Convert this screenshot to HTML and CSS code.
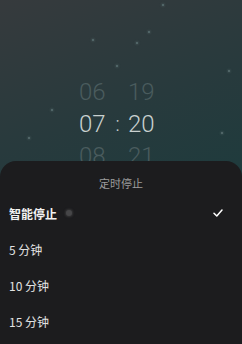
FILE: index.html
```html
<!DOCTYPE html>
<html lang="zh">
<head>
<meta charset="utf-8">
<link rel="stylesheet" href="styles.css">
</head>
<body>
<div class="screen">
  <div class="scene">
    <span class="star" style="left:162px;top:4px"></span>
    <span class="star" style="left:148px;top:31px"></span>
    <span class="star" style="left:92px;top:39px"></span>
    <span class="star" style="left:136px;top:42px"></span>
    <span class="star" style="left:116px;top:65px"></span>
    <span class="star" style="left:228px;top:70px"></span>
    <span class="star" style="left:51px;top:109px"></span>
    <span class="star" style="left:28px;top:137px"></span>
    <span class="star" style="left:221px;top:132px"></span>
    <div class="picker">
      <div class="row faint"><span class="col">06</span><span class="sep"></span><span class="col">19</span></div>
      <div class="row active"><span class="col">07</span><span class="sep">:</span><span class="col">20</span></div>
      <div class="row faint"><span class="col">08</span><span class="sep"></span><span class="col">21</span></div>
    </div>
  </div>
  <div class="sheet">
    <div class="title">定时停止</div>
    <div class="item selected"><span class="label">智能停止</span><span class="dot"></span><svg class="check" width="10" height="8" viewBox="0 0 10 8"><path d="M1 4.2 L3.8 7 L9 1" fill="none" stroke="#ffffff" stroke-width="1.5" stroke-linecap="round" stroke-linejoin="round"/></svg></div>
    <div class="item"><span class="label">5 分钟</span></div>
    <div class="item"><span class="label">10 分钟</span></div>
    <div class="item"><span class="label">15 分钟</span></div>
  </div>
</div>
</body>
</html>
```
FILE: styles.css
```css
html, body {
  margin: 0;
  padding: 0;
  background: #1c1c1e;
}
.screen {
  width: 242px;
  height: 344px;
  overflow: hidden;
  position: relative;
  font-family: "Noto Sans CJK SC", "Noto Sans", sans-serif;
  background: linear-gradient(160deg, #363a3d 0%, #283a3d 35%, #1f3b3d 60%, #22403f 100%);
}
.scene {
  position: relative;
  height: 161px;
  overflow: hidden;
}
.star {
  position: absolute;
  width: 2px;
  height: 2px;
  border-radius: 50%;
  background: #5a6f71;
  box-shadow: 0 0 2px 1px rgba(90, 111, 113, 0.35);
}
.picker {
  padding-top: 76px;
  font-family: Roboto, "Liberation Sans", sans-serif;
  font-weight: 300;
  font-size: 24px;
}
.row {
  display: flex;
  height: 32px;
  line-height: 32px;
  padding-left: 79px;
}
.col {
  width: 28px;
}
.sep {
  width: 21px;
  text-align: center;
  font-size: 20px;
}
.faint {
  color: #4a5c5e;
}
.active {
  color: #c9d1d0;
}
.sheet {
  position: absolute;
  left: 0;
  right: 0;
  top: 161px;
  bottom: 0;
  background: #1c1c1e;
  border-radius: 16px 16px 0 0;
}
.title {
  padding-top: 14px;
  padding-bottom: 4px;
  line-height: 16px;
  font-size: 11px;
  color: #9c9c9c;
  text-align: center;
}
.item {
  display: flex;
  align-items: center;
  height: 36px;
  padding: 0 19px 0 9px;
  font-size: 12px;
  color: #e2e2e2;
}
.selected .label {
  font-weight: 700;
  color: #f2f2f2;
}
.dot {
  width: 6px;
  height: 6px;
  margin-left: 9px;
  border-radius: 50%;
  background: #464648;
  box-shadow: 0 0 2px 1px rgba(70, 70, 72, 0.6);
}
.check {
  margin-left: auto;
}
```
